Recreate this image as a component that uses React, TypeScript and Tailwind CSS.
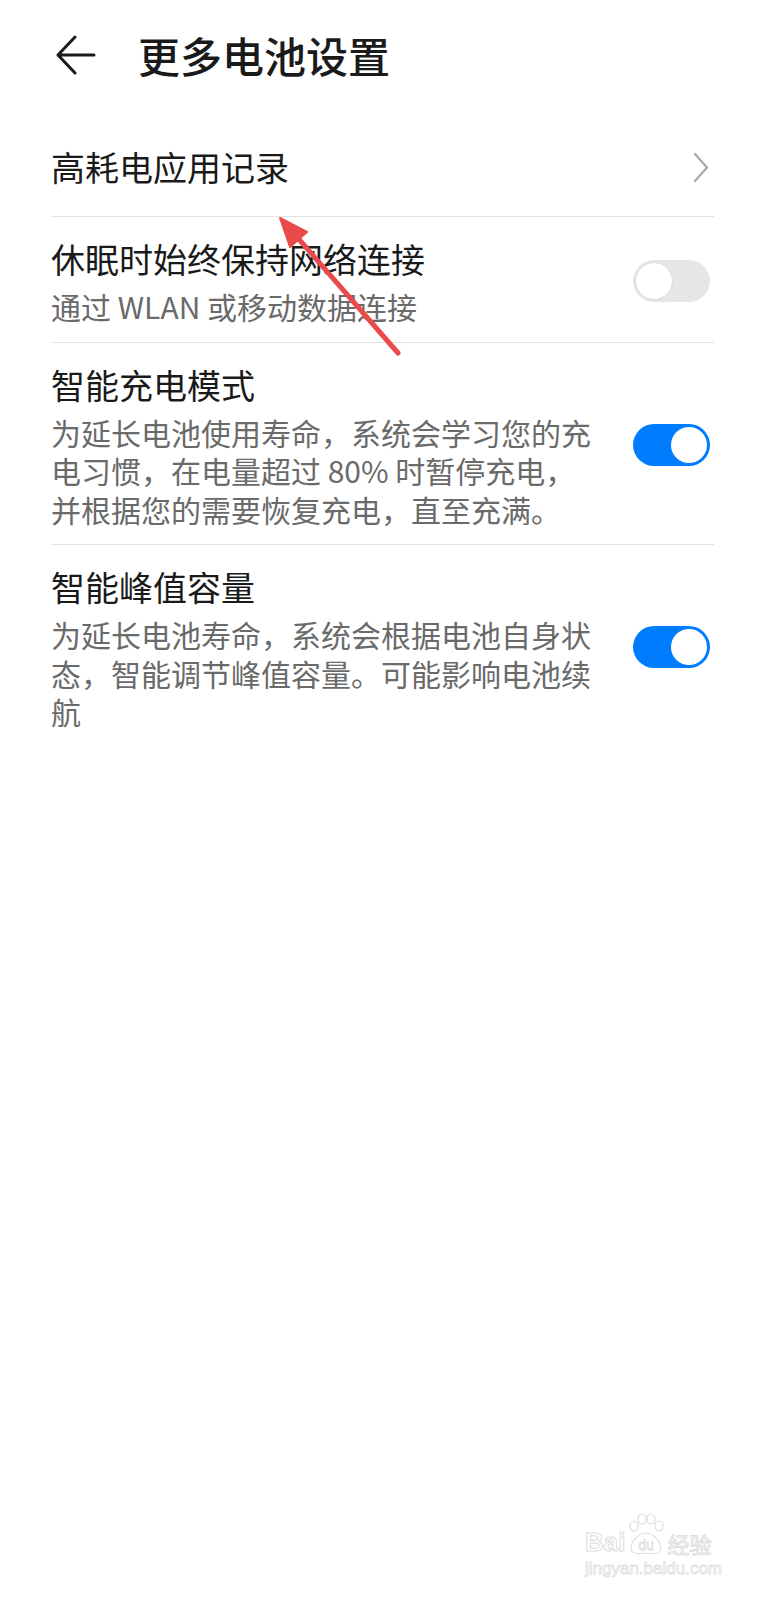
import React from 'react';

const Toggle = ({ on }: { on: boolean }) => (
  <div
    className={
      on
        ? 'flex h-[42px] w-[77px] shrink-0 items-center justify-end rounded-full bg-[#007dff] px-[3px]'
        : 'flex h-[42px] w-[77px] shrink-0 items-center justify-start rounded-full bg-[#e6e6e6] px-[2px]'
    }
  >
    <div
      className={
        on
          ? 'h-[36px] w-[36px] rounded-full bg-white'
          : 'h-[38px] w-[38px] rounded-full border-[1.5px] border-[#dadada] bg-white'
      }
    />
  </div>
);

const Chevron = () => (
  <svg width="16" height="31" viewBox="0 0 16 31" fill="none" className="mr-[5px] shrink-0">
    <path d="M2 2 L14 15.5 L2 29" stroke="#a8a8a8" strokeWidth="2.2" strokeLinecap="round" strokeLinejoin="round" />
  </svg>
);

type Row = { title: string; lines: string[]; on: boolean };

const rows: Row[] = [
  { title: '休眠时始终保持网络连接', lines: ['通过 WLAN 或移动数据连接'], on: false },
  {
    title: '智能充电模式',
    lines: ['为延长电池使用寿命，系统会学习您的充', '电习惯，在电量超过 80% 时暂停充电，', '并根据您的需要恢复充电，直至充满。'],
    on: true,
  },
  {
    title: '智能峰值容量',
    lines: ['为延长电池寿命，系统会根据电池自身状', '态，智能调节峰值容量。可能影响电池续', '航'],
    on: true,
  },
];

export default function App() {
  return (
    <div className="relative min-h-[1600px] w-full bg-white font-['Noto_Sans_CJK_SC','Noto_Sans',sans-serif]">
      {/* header */}
      <div className="flex h-[110px] items-center pl-[56px]">
        <svg width="40" height="40" viewBox="0 0 40 40" fill="none" className="shrink-0">
          <path d="M2 20 H38 M19 2 L2 20 L19 38" stroke="#1a1a1a" strokeWidth="3" strokeLinecap="round" strokeLinejoin="round" />
        </svg>
        <h1 className="ml-[42px] text-[42px] font-medium leading-[50px] text-[#1a1a1a]">更多电池设置</h1>
      </div>

      <div className="px-[51px]">
        <div className="flex items-center justify-between border-b border-[#e3e3e3] pb-[26px] pt-[34px]">
          <span className="text-[34px] leading-[46px] text-[#1a1a1a]">高耗电应用记录</span>
          <Chevron />
        </div>

        {rows.map((r, i) => (
          <div
            key={r.title}
            className={
              i < rows.length - 1
                ? 'flex items-center justify-between border-b border-[#e3e3e3] pb-[16px] pt-[19px]'
                : 'flex items-center justify-between pb-[16px] pt-[19px]'
            }
          >
            <div className="min-w-0 flex-1">
              <div className="text-[34px] leading-[46px] text-[#1a1a1a]">{r.title}</div>
              <div className="mt-[5px] whitespace-nowrap text-[30px] leading-[38.5px] text-[#6a6a6a]">
                {r.lines.map((l) => (
                  <div key={l}>{l}</div>
                ))}
              </div>
            </div>
            <div className="mr-[4px]">
              <Toggle on={r.on} />
            </div>
          </div>
        ))}
      </div>

      {/* red annotation arrow */}
      <svg className="pointer-events-none absolute left-0 top-0" width="765" height="400" viewBox="0 0 765 400">
        <line x1="398" y1="353" x2="297" y2="237" stroke="#ea4a4a" strokeWidth="5" strokeLinecap="round" />
        <polygon points="280,218 307,232 290,247" fill="#ea4a4a" stroke="#ea4a4a" strokeWidth="2" strokeLinejoin="round" />
      </svg>

      {/* watermark */}
      <div className="absolute left-[585px] top-[1514px] flex flex-col items-start">
        <div className="flex items-end">
          <span className="text-[26px] font-bold leading-[28px] text-transparent [-webkit-text-stroke:1px_#dedede] font-['Liberation_Sans',sans-serif]">
            Bai
          </span>
          <svg width="40" height="42" viewBox="0 0 40 42" fill="none" className="mx-[1px]">
            <ellipse cx="8" cy="12" rx="4" ry="5" stroke="#dedede" strokeWidth="1.2" />
            <ellipse cx="16" cy="5" rx="4" ry="5" stroke="#dedede" strokeWidth="1.2" />
            <ellipse cx="25" cy="5" rx="4" ry="5" stroke="#dedede" strokeWidth="1.2" />
            <ellipse cx="33" cy="12" rx="4" ry="5" stroke="#dedede" strokeWidth="1.2" />
            <path d="M20 19 C13 19 4 28 5 35 C6 41 14 40 20 39 C26 40 34 41 35 35 C36 28 27 19 20 19 Z" stroke="#dedede" strokeWidth="1.2" />
            <text x="20" y="36" textAnchor="middle" fontSize="14" fontFamily="Liberation Sans, sans-serif" fill="none" stroke="#dedede" strokeWidth="0.8">
              du
            </text>
          </svg>
          <span className="text-[22px] leading-[26px] text-transparent [-webkit-text-stroke:1px_#dedede]">经验</span>
        </div>
        <span className="mt-[4px] text-[17px] leading-[18px] text-transparent [-webkit-text-stroke:0.8px_#dedede] font-['Liberation_Sans',sans-serif]">
          jingyan.baidu.com
        </span>
      </div>
    </div>
  );
}
